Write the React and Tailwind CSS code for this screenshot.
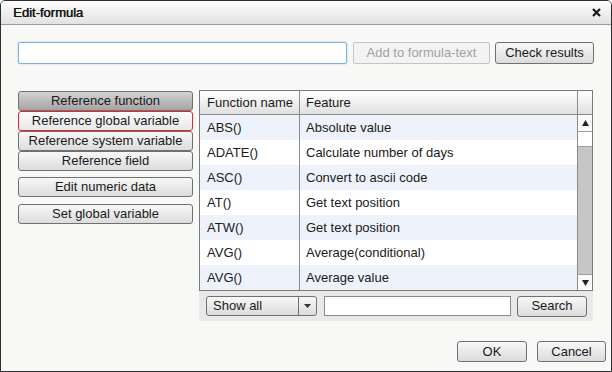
import React from 'react';

const rows = [
  ['ABS()', 'Absolute value'],
  ['ADATE()', 'Calculate number of days'],
  ['ASC()', 'Convert to ascii code'],
  ['AT()', 'Get text position'],
  ['ATW()', 'Get text position'],
  ['AVG()', 'Average(conditional)'],
  ['AVG()', 'Average value'],
];

const btn =
  'flex items-center justify-center border border-[#707070] rounded-[3px] bg-gradient-to-b from-[#f8f8f8] to-[#dcdcdc] text-[#1a1a1a]';

const SideButton = ({ label, selected, focused }) => {
  let cls = btn;
  if (selected) cls = 'flex items-center justify-center border border-[#707070] rounded-[3px] bg-gradient-to-b from-[#d4d4d4] to-[#a4a4a4] text-[#1a1a1a]';
  if (focused) cls = 'flex items-center justify-center border border-[#e8262a] rounded-[3px] bg-gradient-to-b from-[#fbfbfb] to-[#e8e8e8] text-[#1a1a1a]';
  return <div className={`${cls} h-[20px]`}>{label}</div>;
};

export default function App() {
  return (
    <div className="w-[612px] h-[372px] bg-[#f8f9f7] border border-[#2e2e2e] rounded-t-[5px] flex flex-col overflow-hidden font-['Liberation_Sans',Arial,sans-serif] text-[13px] text-[#1a1a1a]">
      {/* title bar */}
      <div className="h-[24px] shrink-0 flex items-center justify-between pl-[12px] pr-[10px] border-b border-[#9c9c9c] bg-gradient-to-b from-[#fefefe] to-[#e2e2e2]">
        <span className="text-[13px] text-[#141414] [text-shadow:0.5px_0_0_#141414]">Edit-formula</span>
        <svg width="9" height="9" viewBox="0 0 9 9">
          <path d="M1 1 L8 8 M8 1 L1 8" stroke="#1a1a1a" strokeWidth="2.2" />
        </svg>
      </div>

      <div className="flex flex-col pl-[17px]">
        {/* formula row */}
        <div className="flex mt-[17px] h-[22px]">
          <div className="w-[329px] h-full bg-white border border-[#7fb0e4] rounded-[2px] shadow-[0_0_2px_#a9cdf3]" />
          <div className="ml-[6px] w-[137px] h-full flex items-center justify-center border border-[#c4c4c4] rounded-[2px] bg-[#f3f3f3] text-[#a2a2a2]">
            Add to formula-text
          </div>
          <div className={`${btn} ml-[5px] w-[99px] h-full`}>Check results</div>
        </div>

        {/* main area */}
        <div className="flex mt-[26px]">
          <div className="w-[175px] flex flex-col mt-[1px]">
            <SideButton label="Reference function" selected />
            <SideButton label="Reference global variable" focused />
            <SideButton label="Reference system variable" />
            <SideButton label="Reference field" />
            <div className="mt-[6px]"><SideButton label="Edit numeric data" /></div>
            <div className="mt-[7px]"><SideButton label="Set global variable" /></div>
          </div>

          <div className="ml-[6px] w-[394px] flex flex-col">
            <div className="border border-[#7a7a7a] bg-white flex flex-col">
              <div className="h-[24px] flex border-b border-[#8a8a8a] bg-gradient-to-b from-[#ffffff] to-[#e0e0e0]">
                <div className="w-[100px] border-r border-[#8a8a8a] flex items-center pl-[7px]">Function name</div>
                <div className="flex-1 flex items-center pl-[6px]">Feature</div>
                <div className="w-[15px] border-l border-[#8a8a8a]" />
              </div>
              <div className="flex">
                <div className="flex-1 flex flex-col">
                  {rows.map(([name, feat], i) => (
                    <div key={i} className={`h-[25px] flex ${i % 2 === 0 ? 'bg-[#eef3fb]' : 'bg-white'}`}>
                      <div className="w-[100px] border-r border-[#8a8a8a] flex items-center pl-[7px]">{name}</div>
                      <div className="flex-1 flex items-center pl-[6px]">{feat}</div>
                    </div>
                  ))}
                </div>
                <div className="w-[15px] border-l border-[#8a8a8a] flex flex-col bg-[#c6c6c6]">
                  <div className="h-[17px] bg-[#fafafa] border-b border-[#a0a0a0] flex items-center justify-center">
                    <svg width="7" height="6" viewBox="0 0 7 6"><path d="M3.5 0 L7 6 L0 6 Z" fill="#222" /></svg>
                  </div>
                  <div className="h-[15px] bg-white border-b border-[#a0a0a0]" />
                  <div className="flex-1" />
                  <div className="h-[16px] bg-[#fafafa] border-t border-[#a0a0a0] flex items-center justify-center">
                    <svg width="7" height="6" viewBox="0 0 7 6"><path d="M0 0 L7 0 L3.5 6 Z" fill="#222" /></svg>
                  </div>
                </div>
              </div>
            </div>
            <div className="h-[30px] bg-[#e9e9e9] flex items-center pl-[7px] pr-[5px]">
              <div className="w-[111px] h-[20px] flex border border-[#707070] rounded-[3px] bg-gradient-to-b from-[#f8f8f8] to-[#dcdcdc]">
                <div className="flex-1 flex items-center pl-[6px] border-r border-[#707070]">Show all</div>
                <div className="w-[17px] flex items-center justify-center">
                  <svg width="7" height="4" viewBox="0 0 7 4"><path d="M0 0 L7 0 L3.5 4 Z" fill="#333" /></svg>
                </div>
              </div>
              <div className="ml-[7px] w-[187px] h-[20px] bg-white border border-[#8a8a8a]" />
              <div className={`${btn} ml-[6px] w-[70px] h-[21px]`}>Search</div>
            </div>
          </div>
        </div>
      </div>

      {/* footer */}
      <div className="flex justify-end mt-[20px] pr-[5px]">
        <div className={`${btn} w-[70px] h-[21px]`}>OK</div>
        <div className={`${btn} ml-[10px] w-[69px] h-[21px]`}>Cancel</div>
      </div>
    </div>
  );
}
